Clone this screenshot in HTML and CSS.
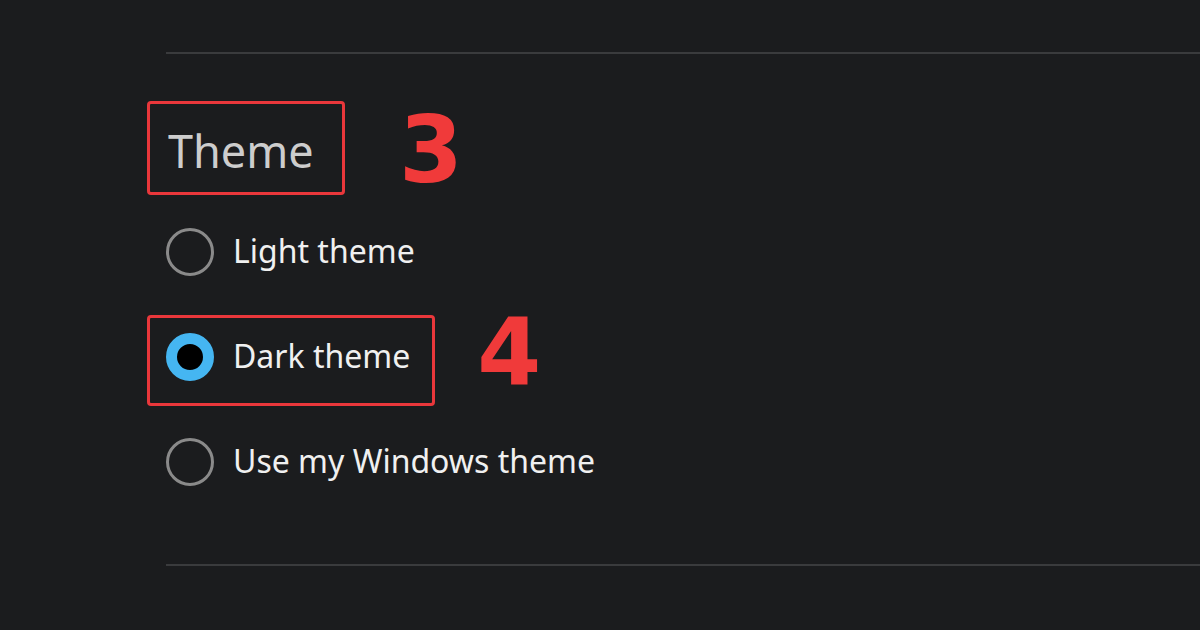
FILE: index.html
```html
<!DOCTYPE html>
<html lang="en">
<head>
    <meta charset="UTF-8">
    <meta name="viewport" content="width=device-width, initial-scale=1.0">
    <title>Theme settings</title>
    <link rel="stylesheet" href="styles.css">
</head>
<body>
    <div class="panel">
        <div class="divider"></div>

        <div class="section">
            <div class="annotated heading-row">
                <div class="mark heading-mark">
                    <h2 class="heading">Theme</h2>
                </div>
                <span class="step step-3">3</span>
            </div>

            <div class="option">
                <span class="radio"></span>
                <span class="label">Light theme</span>
            </div>

            <div class="annotated option-row">
                <div class="mark option option-mark">
                    <span class="radio checked"></span>
                    <span class="label">Dark theme</span>
                </div>
                <span class="step step-4">4</span>
            </div>

            <div class="option last">
                <span class="radio"></span>
                <span class="label">Use my Windows theme</span>
            </div>
        </div>

        <div class="divider"></div>
    </div>
</body>
</html>
```

FILE: styles.css
```css
html, body {
    margin: 0;
    padding: 0;
}
body {
    background-color: #1b1c1e;
    font-family: "Noto Sans", "Open Sans", sans-serif;
    color: #f0f0f0;
    width: 1200px;
    height: 630px;
    overflow: hidden;
}
.panel {
    padding-top: 52px;
    padding-left: 166px;
}
.divider {
    height: 2px;
    background-color: #3a3b3d;
}
.section {
    padding-top: 47px;
    padding-bottom: 78px;
}
.annotated {
    display: flex;
    align-items: center;
}
.mark {
    border: 3px solid #e9373b;
    border-radius: 4px;
    margin-left: -19px;
}
.heading-mark {
    width: 192px;
    height: 88px;
    box-sizing: content-box;
    display: flex;
    align-items: center;
}
.heading {
    margin: 0;
    padding-left: 18px;
    padding-top: 4px;
    font-size: 45px;
    font-weight: normal;
    color: #cdcdcd;
    line-height: 1;
}
.step {
    font-family: "DejaVu Sans", "Liberation Sans", sans-serif;
    font-weight: bold;
    color: #f03a3a;
    font-size: 92px;
    line-height: 60px;
}
.step-3 {
    margin-left: 54px;
    margin-top: 6px;
}
.step-4 {
    margin-left: 42px;
    margin-top: -15px;
}
.option {
    display: flex;
    align-items: center;
    gap: 19px;
    height: 48px;
    margin-top: 33px;
}
.option-row {
    margin-top: 39px;
}
.option-mark {
    margin-top: 0;
    height: 48px;
    padding: 15px 22px 22px 16px;
}
.option.last {
    margin-top: 32px;
}
.radio {
    width: 48px;
    height: 48px;
    box-sizing: border-box;
    border: 3px solid #8a8a8a;
    border-radius: 50%;
    flex-shrink: 0;
}
.radio.checked {
    border: 11px solid #45b6f2;
    background-color: #000;
}
.label {
    font-size: 32px;
    color: #f0f0f0;
    padding-bottom: 4px;
}
```
